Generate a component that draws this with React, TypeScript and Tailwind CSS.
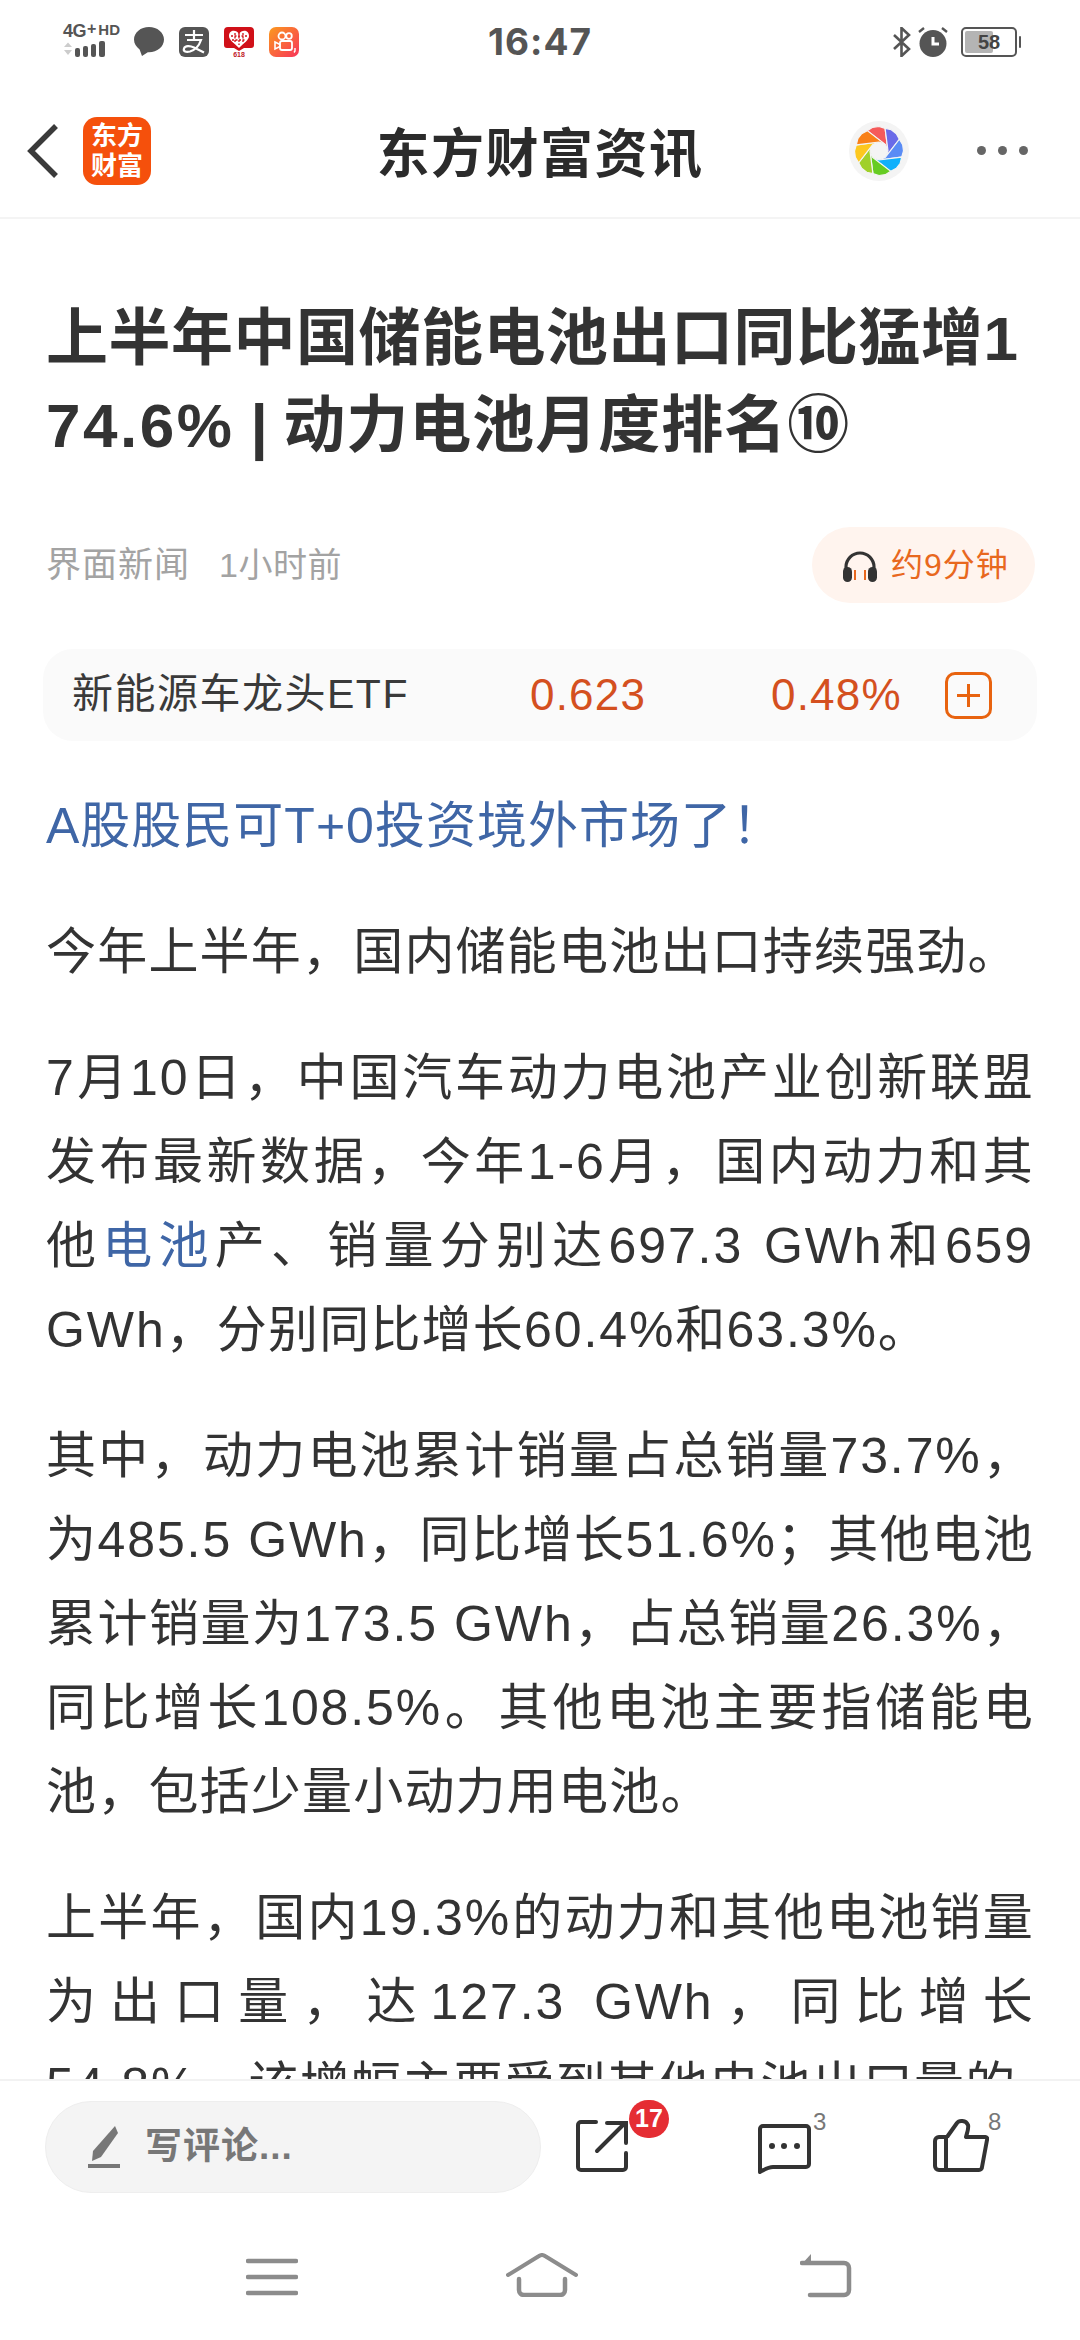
const paragraphs = [
  [[{ t: '今年上半年，国内储能电池出口持续强劲。' }]],
  [
    [{ t: '7月10日，中国汽车动力电池产业创新联盟' }],
    [{ t: '发布最新数据，今年1-6月，国内动力和其' }],
    [{ t: '他' }, { t: '电池', link: true }, { t: '产、销量分别达697.3 GWh和659' }],
    [{ t: 'GWh，分别同比增长60.4%和63.3%。' }],
  ],
  [
    [{ t: '其中，动力电池累计销量占总销量73.7%，' }],
    [{ t: '为485.5 GWh，同比增长51.6%；其他电池' }],
    [{ t: '累计销量为173.5 GWh，占总销量26.3%，' }],
    [{ t: '同比增长108.5%。其他电池主要指储能电' }],
    [{ t: '池，包括少量小动力用电池。' }],
  ],
  [
    [{ t: '上半年，国内19.3%的动力和其他电池销量' }],
    [{ t: '为出口量，达127.3 GWh，同比增长' }],
    [{ t: '54.8%，该增幅主要受到其他电池出口量的' }],
  ],
];

const blades = ['#f55a5a', '#6a6ae8', '#5a8cf5', '#10b0fb', '#66cc22', '#a0d02a', '#fdc81e', '#f98018'];

// latin runs sit a bit wider than the CJK around them
function Mixed({ text }: { text: string }) {
  const parts = text.split(/([0-9A-Za-z.+%\- ]+)/).filter(Boolean);
  return (
    <>
      {parts.map((p, i) => (
        <span key={i} className={/^[0-9A-Za-z.+%\- ]+$/.test(p) ? 'tracking-[1.9px]' : ''}>
          {p}
        </span>
      ))}
    </>
  );
}

function Aperture() {
  const pt = (r: number, deg: number) => {
    const a = ((deg - 90) * Math.PI) / 180;
    return `${(30 + r * Math.cos(a)).toFixed(2)},${(30 + r * Math.sin(a)).toFixed(2)}`;
  };
  return (
    <svg width="60" height="60" viewBox="0 0 60 60">
      <circle cx="30" cy="30" r="30" fill="#f4f4f4" />
      {blades.map((c, i) => {
        const a = i * 45 - 30;
        return (
          <polygon
            key={c}
            fill={c}
            stroke="#f4f4f4"
            strokeWidth="1.2"
            points={[pt(23.5, a), pt(24.5, a + 15), pt(24.5, a + 30), pt(23.5, a + 45), pt(9, a + 120), pt(9, a + 75)].join(' ')}
          />
        );
      })}
    </svg>
  );
}

function StatusLeft() {
  return (
    <div className="flex items-center">
      <div className="w-[60px] h-[32px] relative">
        <div className="absolute left-0 top-[-3px] flex items-start leading-[16px] font-bold text-[#555] whitespace-nowrap">
          <span className="text-[18px] tracking-[-0.5px]">4G</span>
          <span className="text-[16px] ml-[1px] leading-[12px]">+</span>
          <span className="text-[15px] ml-[2px] leading-[14px]">HD</span>
        </div>
        <svg className="absolute left-0 top-[14px]" width="60" height="18" viewBox="0 0 60 18">
          <path d="M1 7 L5 2.5 L9 7Z M1 10 L5 15 L9 10Z" fill="#ccc" />
          <rect x="12" y="8" width="5" height="9" rx="2" fill="#555" />
          <rect x="20" y="6" width="5" height="11" rx="2" fill="#555" />
          <rect x="28" y="4" width="5" height="13" rx="2" fill="#555" />
          <rect x="36" y="1" width="6" height="16" rx="2" fill="#555" />
        </svg>
      </div>
      <svg className="ml-[11px]" width="30" height="30" viewBox="0 0 30 30">
        <path d="M15 0C6.7 0 0 5.5 0 12.6c0 4 2.2 7.5 5.6 9.8L8 29l5.8-3.8c.4 0 .8.1 1.2.1 8.3 0 15-5.6 15-12.7S23.3 0 15 0Z" fill="#555" />
      </svg>
      <svg className="ml-[15px]" width="30" height="30" viewBox="0 0 30 30">
        <rect width="30" height="30" rx="6" fill="#555" />
        <path d="M6 8h18M15 3v10M8 13h14c-2 6-6 10-11 11.500c-4 1-7 0-6-3 1-3 6-3 10-1l10 5" stroke="#fff" strokeWidth="2.2" fill="none" />
      </svg>
      <svg className="ml-[15px]" width="30" height="30" viewBox="0 0 30 30">
        <path d="M4 0h22a4 4 0 0 1 4 4v14c0 2-1 3-3 3h-7l-5 3-5-3H3c-2 0-3-1-3-3V4a4 4 0 0 1 4-4Z" fill="#d01018" />
        <path d="M15 7C12 2 5 3 5 9c0 4 5 7 10 12 5-5 10-8 10-12 0-6-7-7-10-2Z" fill="#fff" />
        <path d="M7 9h16M8 13h14M15 6v12M11 6v10M19 6v10" stroke="#d01018" strokeWidth="1.3" strokeDasharray="2 1.5" />
        <text x="15" y="30" textAnchor="middle" fontSize="7" fontWeight="700" fill="#c02028">618</text>
      </svg>
      <svg className="ml-[15px]" width="30" height="30" viewBox="0 0 30 30">
        <defs>
          <linearGradient id="ks" x1="0" y1="0" x2="1" y2="1">
            <stop offset="0" stopColor="#fb9a1e" />
            <stop offset="1" stopColor="#f8345a" />
          </linearGradient>
        </defs>
        <rect width="30" height="30" rx="7" fill="url(#ks)" />
        <circle cx="13" cy="9" r="3.5" fill="none" stroke="#fff" strokeWidth="1.8" />
        <circle cx="20" cy="9" r="2.8" fill="none" stroke="#fff" strokeWidth="1.8" />
        <rect x="11" y="14" width="12" height="9" rx="2" fill="none" stroke="#fff" strokeWidth="1.8" />
        <path d="M6 15l5 2.500v2L6 22Z" fill="none" stroke="#fff" strokeWidth="1.6" />
        <path d="M26 21v3l-1 1.500" stroke="#fff" strokeWidth="1.4" fill="none" />
      </svg>
    </div>
  );
}

function StatusRight() {
  return (
    <div className="flex items-center">
      <svg width="20" height="30" viewBox="0 0 20 30">
        <path d="M2 8l15 14-7.500 7V1L17 8 2 22" fill="none" stroke="#555" strokeWidth="2.600" />
      </svg>
      <svg className="ml-[6px]" width="30" height="30" viewBox="0 0 30 30">
        <circle cx="15" cy="16.500" r="13.500" fill="#555" />
        <path d="M15 10v7h6" fill="none" stroke="#fff" strokeWidth="3" />
        <path d="M1 5l5-4M29 5l-5-4" stroke="#555" strokeWidth="2.400" />
      </svg>
      <div className="ml-[13px] relative w-[56px] h-[30px] rounded-[5px] border-[2px] border-[#555] bg-white">
        <div className="absolute left-[2px] top-[2px] bottom-[2px] w-[28px] bg-[#b4b4b4] rounded-[2px]" />
        <div className="absolute inset-0 flex items-center justify-center text-[20px] leading-none font-bold text-[#444]">
          58
        </div>
        <div className="absolute right-[-6px] top-[7px] w-[2px] h-[12px] bg-[#555] rounded-full" />
      </div>
    </div>
  );
}

function Headphones() {
  return (
    <svg width="40" height="33" viewBox="0 0 40 33">
      <path d="M6 20V18a14 14 0 0 1 28 0v2" fill="none" stroke="#333" strokeWidth="3.200" />
      <rect x="3" y="18" width="9" height="15" rx="4.500" fill="#333" />
      <rect x="28" y="18" width="9" height="15" rx="4.500" fill="#333" />
      <path d="M15 21v10M25 21v10" stroke="#e8681e" strokeWidth="2" />
    </svg>
  );
}

function BottomBar() {
  return (
    <div className="bg-white border-t-2 border-[#f2f2f2] relative z-10">
      <div className="h-[145px] flex items-start pl-[45px] pt-[20px]">
        <div className="w-[496px] h-[92px] rounded-full bg-[#f4f4f4] border border-[#eeeeee] flex items-center pl-[42px]">
          <svg width="32" height="42" viewBox="0 0 32 42">
            <path d="M27 0l3 7-17 24-9 4 1-10Z" fill="#777" />
            <rect x="0" y="38" width="32" height="4" fill="#777" />
          </svg>
          <span className="ml-[25px] text-[37px] tracking-[1px] font-semibold text-[#777]">写评论...</span>
        </div>
        <div className="relative ml-[35px] mt-[19px] w-[52px] h-[52px]">
          <svg width="52" height="52" viewBox="0 0 52 52">
            <path d="M20 2H5a3 3 0 0 0-3 3v42a3 3 0 0 0 3 3h42a3 3 0 0 0 3-3V33" fill="none" stroke="#333" strokeWidth="4" strokeLinecap="round" />
            <path d="M21 31L49 3M31 3h19v20" fill="none" stroke="#333" strokeWidth="4" strokeLinecap="round" />
          </svg>
          <div className="absolute left-[53px] top-[-20px] w-[40px] h-[38px] rounded-full bg-[#e52d33] text-white text-[25px] font-bold flex items-center justify-center">
            17
          </div>
        </div>
        <div className="relative ml-[129px] mt-[22px] w-[55px] h-[52px]">
          <svg width="55" height="52" viewBox="0 0 55 52">
            <path d="M3 49V6a3 3 0 0 1 3-3h43a3 3 0 0 1 3 3v35a3 3 0 0 1-3 3H16c-5 0-9 3-13 5Z" fill="none" stroke="#333" strokeWidth="4" strokeLinejoin="round" />
            <circle cx="15" cy="23" r="3" fill="#333" />
            <circle cx="27" cy="23" r="3" fill="#333" />
            <circle cx="40" cy="23" r="3" fill="#333" />
          </svg>
          <span className="absolute left-[56px] top-[-15px] text-[24px] leading-[28px] text-[#777]">3</span>
        </div>
        <div className="relative ml-[121px] mt-[17px] w-[56px] h-[54px]">
          <svg width="56" height="54" viewBox="0 0 56 54">
            <path d="M14 19L24 5c2-3 9-3 11 2 1 3-1 8-2 12h19a2 2 0 0 1 2 3l-5 27a3 3 0 0 1-3 3H6a4 4 0 0 1-4-4V23a4 4 0 0 1 4-4h8M13 19v33" fill="none" stroke="#333" strokeWidth="4" strokeLinejoin="round" />
          </svg>
          <span className="absolute left-[55px] top-[-10px] text-[24px] leading-[28px] text-[#777]">8</span>
        </div>
      </div>
      <div className="h-[114px] flex items-start pt-[27px]">
        <svg className="ml-[246px] mt-[5px]" width="52" height="38" viewBox="0 0 52 38">
          <path d="M2 3h48M2 19h48M2 35h48" stroke="#8c8c8c" strokeWidth="4.500" strokeLinecap="round" />
        </svg>
        <svg className="ml-[208px]" width="72" height="44" viewBox="0 0 72 44">
          <path d="M2 22L33 3q3-2 6 0l31 19" fill="none" stroke="#8c8c8c" strokeWidth="4" strokeLinecap="round" />
          <path d="M13 26v11a5 5 0 0 0 5 5h36a5 5 0 0 0 5-5V26" fill="none" stroke="#8c8c8c" strokeWidth="4.500" strokeLinecap="round" />
        </svg>
        <svg className="ml-[222px] mt-[1px]" width="52" height="44" viewBox="0 0 52 44">
          <path d="M2 9h42a5 5 0 0 1 5 5v22a5 5 0 0 1-5 5H10" fill="none" stroke="#8c8c8c" strokeWidth="4.500" strokeLinecap="round" />
          <path d="M11 0L1 11h10Z" fill="#8c8c8c" />
        </svg>
      </div>
    </div>
  );
}

export default function App() {
  return (
    <div lang="zh-CN" className="w-[1080px] h-[2340px] flex flex-col overflow-hidden bg-white [font-family:'Liberation_Sans','Noto_Sans_CJK_SC',sans-serif]">
      {/* status bar */}
      <div className="h-[84px] shrink-0 relative flex items-center justify-between pl-[63px] pr-[63px]">
        <StatusLeft />
        <div className="absolute left-0 right-0 text-center text-[37px] font-bold text-[#555] tracking-[1px] [font-family:Inter,sans-serif]">16:47</div>
        <StatusRight />
      </div>

      {/* nav */}
      <div className="h-[135px] shrink-0 relative flex items-center border-b-2 border-[#f4f4f4]">
        <svg className="ml-[27px]" width="32" height="56" viewBox="0 0 32 56">
          <path d="M29 3L4 28l25 25" fill="none" stroke="#3a3a3a" strokeWidth="5.500" />
        </svg>
        <div className="ml-[24px] w-[68px] h-[68px] rounded-[14px] bg-[#f5500c] flex flex-col items-center justify-center text-white text-[26px] font-bold leading-[30px]">
          <span>东方</span>
          <span>财富</span>
        </div>
        <div className="absolute left-0 right-0 pt-[8px] text-center text-[53px] font-semibold text-[#2b2b2b] tracking-[1.5px]">东方财富资讯</div>
        <div className="ml-auto mr-[171px]">
          <Aperture />
        </div>
        <div className="absolute right-[52px] flex gap-[12px]">
          <span className="w-[9px] h-[9px] rounded-full bg-[#666]" />
          <span className="w-[9px] h-[9px] rounded-full bg-[#666]" />
          <span className="w-[9px] h-[9px] rounded-full bg-[#666]" />
        </div>
      </div>

      {/* article */}
      <div className="flex-1 min-h-0 overflow-hidden px-[46px]">
        <h1 className="mt-[76px] text-[62px] leading-[87px] font-bold text-[#333] tracking-[0.5px] break-all">
          上半年中国储能电池出口同比猛增1<span className="tracking-[2.5px]">74.6%</span>
          <span className="tracking-[-1px]"> | </span>
          <span className="tracking-[1px]">动力电池月度排名⑩</span>
        </h1>

        <div className="mt-[58px] flex items-center justify-between">
          <div className="tracking-[1px] text-[#a3a3a3] flex items-center gap-[29px]">
            <span className="text-[35px]">界面新闻</span>
            <span className="text-[34px] tracking-[0.5px]">1小时前</span>
          </div>
          <div className="w-[223px] h-[76px] rounded-full bg-[#fff4ee] flex items-center pl-[28px] gap-[11px] mr-[-1px]">
            <Headphones />
            <span className="text-[32px] tracking-[1px] text-[#e8681e] whitespace-nowrap">约9分钟</span>
          </div>
        </div>

        <div className="mt-[46px] mx-[-3px] w-[994px] h-[92px] rounded-[30px] bg-[#fafafa] flex items-center pl-[29px]">
          <span className="text-[41px] tracking-[1.5px] text-[#3a3a3a] w-[458px]">新能源车龙头ETF</span>
          <span className="text-[44px] tracking-[1.2px] text-[#d4501f] w-[241px]">0.623</span>
          <span className="text-[44px] tracking-[1.2px] text-[#d4501f] w-[174px]">0.48%</span>
          <span className="w-[47px] h-[47px] rounded-[10px] border-[3px] border-[#e8630f] flex items-center justify-center">
            <svg width="25" height="25" viewBox="0 0 25 25">
              <path d="M1 12.500h23M12.500 1v23" stroke="#e8630f" strokeWidth="3" />
            </svg>
          </span>
        </div>

        <p className="mt-[43px] text-[50px] tracking-[1px] leading-[84px] text-[#3f66a6]">A股股民可T+0投资境外市场了！</p>

        {paragraphs.map((lines, i) => (
          <div key={i} className="mt-[42px] text-[50px] tracking-[1.2px] leading-[84px] text-[#333333]">
            {lines.map((segs, j) => (
              <div key={j} className={j < lines.length - 1 ? 'text-justify [text-align-last:justify]' : ''}>
                {segs.map((s, k) => (
                  <span key={k} className={s.link ? 'text-[#3f66a6]' : ''}>
                    <Mixed text={s.t} />
                  </span>
                ))}
              </div>
            ))}
          </div>
        ))}
      </div>

      <BottomBar />
    </div>
  );
}
